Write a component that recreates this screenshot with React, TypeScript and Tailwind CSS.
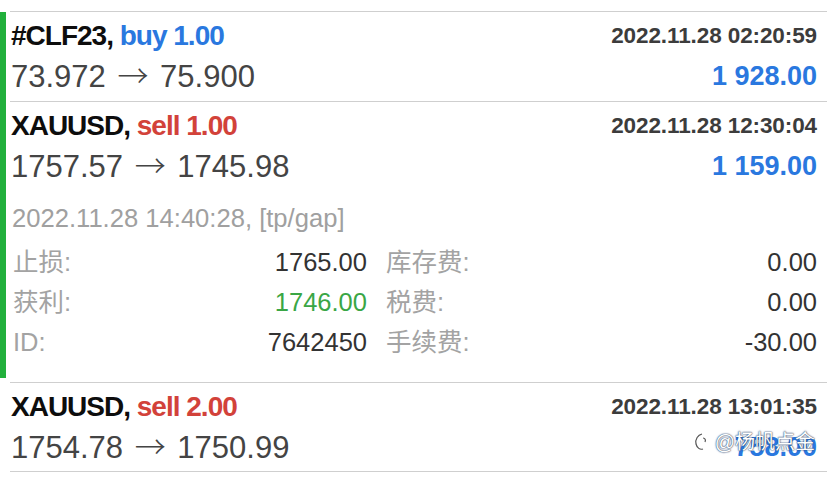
const SANS = "font-['Liberation_Sans',Arial,'Noto_Sans_CJK_SC',sans-serif]";

type Trade = {
  symbol: string;
  side: "buy" | "sell";
  volume: string;
  openedAt: string;
  from: string;
  to: string;
  profit: string;
};

const trades: Trade[] = [
  { symbol: "#CLF23", side: "buy", volume: "1.00", openedAt: "2022.11.28 02:20:59", from: "73.972", to: "75.900", profit: "1 928.00" },
  { symbol: "XAUUSD", side: "sell", volume: "1.00", openedAt: "2022.11.28 12:30:04", from: "1757.57", to: "1745.98", profit: "1 159.00" },
  { symbol: "XAUUSD", side: "sell", volume: "2.00", openedAt: "2022.11.28 13:01:35", from: "1754.78", to: "1750.99", profit: "758.00" },
];

function TradeHead({ t }: { t: Trade }) {
  return (
    <>
      <div className="mt-[4px] flex h-[40px] items-center justify-between">
        <span className="text-[28px] font-bold tracking-[-1px] text-[#0d0d0d]">
          {t.symbol},{" "}
          <span className={t.side === "buy" ? "text-[#2a78df]" : "text-[#d2423a]"}>
            {t.side} {t.volume}
          </span>
        </span>
        <span className="text-[22.5px] font-bold tracking-[-0.1px] text-[#3c3c3c]">{t.openedAt}</span>
      </div>
      <div className="flex h-[40px] items-center justify-between">
        <span className="text-[31px] text-[#444]">
          {t.from}{" "}
          <span className="mx-[3px] font-['Noto_Sans_CJK_SC',sans-serif] text-[31px] font-light">→</span>{" "}
          {t.to}
        </span>
        <span className="text-[27px] font-bold text-[#2a78df]">{t.profit}</span>
      </div>
    </>
  );
}

function DetailRow({ label, value, valueClass, label2, value2 }: {
  label: string;
  value: string;
  valueClass?: string;
  label2: string;
  value2: string;
}) {
  return (
    <div className="flex h-[40px] items-center">
      <div className="flex w-[354px] items-center justify-between">
        <span className="text-[#a3a3a3]">{label}</span>
        <span className={valueClass ?? "text-[#333]"}>{value}</span>
      </div>
      <div className="ml-[19px] flex flex-1 items-center justify-between">
        <span className="text-[#a3a3a3]">{label2}</span>
        <span className="text-[#333]">{value2}</span>
      </div>
    </div>
  );
}

export default function App() {
  return (
    <div className={`h-[485px] w-[827px] overflow-hidden bg-white pt-[11px] ${SANS}`}>
      <div className="flex">
        <div className="mt-[1px] mb-[4px] w-[6px] bg-[#22b03c]" />
        <div className="ml-[4px] flex-1">
          <div className="h-[90px] border-t border-[#cfcfcf] pr-[10px] pl-[1px]">
            <TradeHead t={trades[0]} />
          </div>
          <div className="border-t border-[#cfcfcf] pr-[10px] pl-[1px] pb-[20px]">
            <TradeHead t={trades[1]} />
            <div className="mt-[12px] flex h-[40px] items-center pl-[1px] text-[25.6px] text-[#a0a0a0]">
              2022.11.28 14:40:28, [tp/gap]
            </div>
            <div className="mt-[4px] pl-[2px] text-[25.5px]">
              <DetailRow label="止损:" value="1765.00" label2="库存费:" value2="0.00" />
              <DetailRow label="获利:" value="1746.00" valueClass="text-[#3aa645]" label2="税费:" value2="0.00" />
              <DetailRow label="ID:" value="7642450" label2="手续费:" value2="-30.00" />
            </div>
          </div>
        </div>
      </div>
      <div className="pl-[10px]">
        <div className="relative h-[90px] border-y border-[#cfcfcf] pr-[10px] pl-[1px]">
          <TradeHead t={trades[2]} />
          <div className="absolute right-[12px] bottom-[14px] flex items-center gap-[4px] text-[20px] text-white [text-shadow:0_0_2px_#2b4f8a,0_0_1px_#222]">
            <svg width="18" height="20" viewBox="0 0 18 20" fill="none" stroke="#555" strokeWidth="1.2">
              <path d="M9 2c-4 1-7 5-6 10 1 4 4 6 7 5" />
              <path d="M10 6c2 0 3 2 2 4" />
            </svg>
            <span>@杨帆点金</span>
          </div>
        </div>
      </div>
    </div>
  );
}
